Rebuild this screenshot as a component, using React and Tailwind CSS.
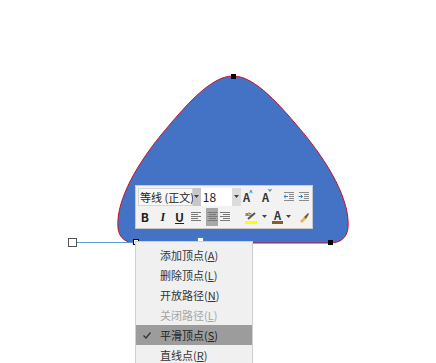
import React from "react";

const ff = { fontFamily: '"Segoe UI", "Noto Sans CJK SC", sans-serif' };

function Caret() {
    return (
        <svg width="5" height="4" viewBox="0 0 5 4" className="block">
            <path d="M0 0 L5 0 L2.5 3 Z" fill="#444" />
        </svg>
    );
}

function AlignIcon({ kind }) {
    const rows = [10, 7, 10, 7, 10];
    return (
        <svg width="11" height="10" viewBox="0 0 11 10">
            {rows.map((w, i) => {
                let sx = 1;
                if (kind === "center") sx = (11 - w) / 2;
                if (kind === "right") sx = 11 - w;
                return <rect key={i} x={sx} y={i * 2} width={w} height="1" fill="#7a7a7a" />;
            })}
        </svg>
    );
}

function IndentIcon({ dir }) {
    return (
        <svg width="12" height="10" viewBox="0 0 12 10">
            {[0, 2, 4, 6, 8].map((y) => (
                <rect key={y} x={y === 0 || y === 8 ? 1 : 6} y={y} width={y === 0 || y === 8 ? 10 : 5} height="1" fill="#8a8a8a" />
            ))}
            {dir === "out" ? (
                <path d="M5 4.5 L1 4.5 M2.8 2.8 L1 4.5 L2.8 6.2" stroke="#3d7ab8" strokeWidth="1" fill="none" />
            ) : (
                <path d="M0.5 4.5 L4.5 4.5 M2.8 2.8 L4.5 4.5 L2.8 6.2" stroke="#3d7ab8" strokeWidth="1" fill="none" />
            )}
        </svg>
    );
}

function Toolbar() {
    return (
        <div
            className="absolute left-[135px] top-[185px] w-[178px] h-[44px] bg-[#f2f2f2] border border-[#c9c9c9] px-[2px] py-[2px] flex flex-col gap-[2px]"
            style={ff}
        >
            <div className="flex items-center h-[19px]">
                <div className="flex items-center h-full w-[55px] bg-[#f8f8f8] border border-[#d6d6d6] pl-[1px] text-[11px] text-[#222] leading-none whitespace-nowrap">
                    等线 (正文)
                </div>
                <div className="flex items-center justify-center h-full w-[8px] bg-[#c7c7c7]">
                    <Caret />
                </div>
                <div className="flex items-center h-full w-[32px] bg-white pl-[2px] text-[12px] text-[#222] leading-none">
                    18
                </div>
                <div className="flex items-center justify-center h-full w-[9px] bg-[#dcdcdc]">
                    <Caret />
                </div>
                <span className="relative ml-[2px] text-[11px] font-bold text-[#333] leading-none">
                    A<span className="absolute -top-[3px] -right-[3px] text-[7px] text-[#3d7ab8]">^</span>
                </span>
                <span className="relative ml-[12px] text-[11px] font-bold text-[#333] leading-none">
                    A<span className="absolute -top-[3px] -right-[3px] text-[7px] text-[#3d7ab8]">ˇ</span>
                </span>
                <span className="ml-[14px] flex"><IndentIcon dir="out" /></span>
                <span className="ml-[3px] flex"><IndentIcon dir="in" /></span>
            </div>
            <div className="flex items-center h-[19px] text-[12px] text-[#222] leading-none">
                <span className="w-[14px] text-center font-bold">B</span>
                <span className="w-[22px] text-center font-bold italic" style={{ fontFamily: '"Liberation Serif", serif' }}>I</span>
                <span className="w-[12px] text-center font-bold underline">U</span>
                <span className="w-[21px] flex justify-center"><AlignIcon kind="left" /></span>
                <span className="w-[12px] h-[18px] bg-[#a8a8a8] flex items-center justify-center"><AlignIcon kind="center" /></span>
                <span className="w-[12px] flex justify-center"><AlignIcon kind="right" /></span>
                <span className="ml-[14px] flex items-center">
                    <svg width="14" height="14" viewBox="0 0 14 14">
                        <text x="1" y="6" fontSize="6" fill="#333" fontFamily="Liberation Sans">ab</text>
                        <path d="M4 9 L11 3" stroke="#555" strokeWidth="2" />
                        <rect x="1" y="11" width="12" height="3" fill="#ffff00" />
                    </svg>
                </span>
                <span className="ml-[4px]"><Caret /></span>
                <span className="ml-[5px] flex flex-col items-center">
                    <span className="text-[11px] font-bold text-[#333] leading-none">A</span>
                    <span className="block w-[11px] h-[3px] bg-[#8b5a2b]" />
                </span>
                <span className="ml-[3px]"><Caret /></span>
                <span className="ml-[7px] flex items-center">
                    <svg width="12" height="12" viewBox="0 0 12 12">
                        <path d="M2 10 L6 6 L8 8 L4 12 Z" fill="#e8b64d" />
                        <path d="M6 6 L10 2 L11 3 L8 8 Z" fill="#7a5a2a" />
                    </svg>
                </span>
            </div>
        </div>
    );
}

const items = [
    { label: "添加顶点", key: "A" },
    { label: "删除顶点", key: "L" },
    { label: "开放路径", key: "N" },
    { label: "关闭路径", key: "L", disabled: true },
    { label: "平滑顶点", key: "S", checked: true },
    { label: "直线点", key: "R" },
];

function Menu() {
    return (
        <div
            className="absolute left-[135px] top-[241px] w-[118px] h-[140px] bg-[#f0f0f0] border border-[#cfcfcf] pt-[3px]"
            style={ff}
        >
            {items.map((it, i) => (
                <div
                    key={i}
                    className={
                        "relative flex items-center h-[20px] pl-[24px] text-[11px] leading-none " +
                        (it.checked ? "bg-[#9c9c9c] text-[#222]" : it.disabled ? "text-[#a6a6a6]" : "text-[#333]")
                    }
                >
                    {it.checked && (
                        <svg width="8" height="7" viewBox="0 0 8 7" className="absolute left-[7px] top-[7px]">
                            <path d="M0.5 3.5 L3 6 L7.5 0.5" stroke="#333" strokeWidth="1.2" fill="none" />
                        </svg>
                    )}
                    {it.label}(<span className="underline">{it.key}</span>)
                </div>
            ))}
        </div>
    );
}

export default function App() {
    return (
        <div className="relative w-[436px] h-[363px] overflow-hidden bg-white">
            <svg className="absolute inset-0" width="436" height="363" viewBox="0 0 436 363">
                <path
                    d="M233,76 C255,76 280,105 305,135 C335,172 350,205 348,228 C347,238 340,243 330,243 L136,243 C126,243 119,238 118,228 C116,205 131,172 161,135 C186,105 211,76 233,76 Z"
                    fill="#4472c4"
                    stroke="#c8102e"
                    strokeWidth="1"
                />
                <line x1="76" y1="242.5" x2="134" y2="242.5" stroke="#5b9bd5" strokeWidth="1" />
                <rect x="68.5" y="238.5" width="8" height="8" fill="white" stroke="#555" strokeWidth="1" />
                <rect x="231" y="74" width="5" height="5" fill="black" />
                <rect x="328" y="240" width="5" height="5" fill="black" />
                <rect x="133.5" y="239.5" width="5" height="5" fill="white" stroke="black" strokeWidth="1" />
                <rect x="197.5" y="237.5" width="6" height="5" fill="white" stroke="#777" strokeWidth="1" />
            </svg>
            <Toolbar />
            <Menu />
        </div>
    );
}
